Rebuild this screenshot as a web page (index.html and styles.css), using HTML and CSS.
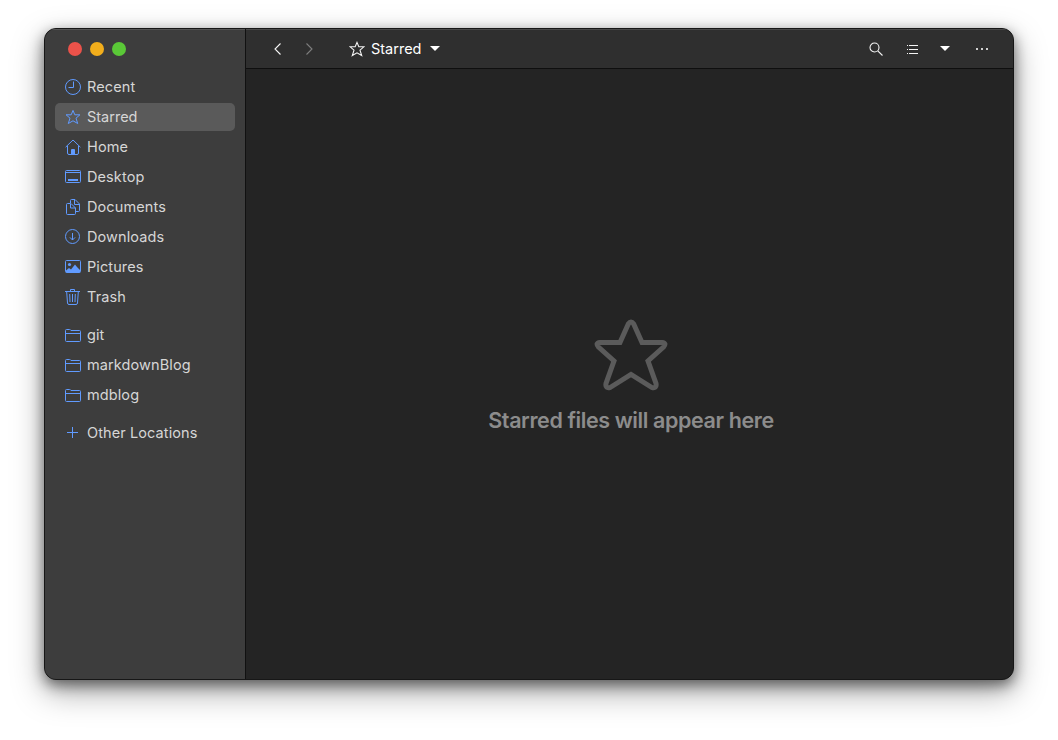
FILE: index.html
```html
<!DOCTYPE html>
<html lang="en">
<head>
<meta charset="utf-8">
<title>Starred</title>
<link rel="stylesheet" href="styles.css">
</head>
<body>
<div class="window">
  <aside class="sidebar">
    <div class="controls"><span class="dot close"></span><span class="dot minimize"></span><span class="dot maximize"></span></div>
    <nav class="places">
      <a class="place"><svg class="icon" viewBox="0 0 16 16"><circle cx="8" cy="8" r="7.5"/><path d="M8.500 2.500v6h-5"/></svg><span>Recent</span></a>
      <a class="place active"><svg class="icon" viewBox="0 0 16 16"><path d="M8 1.400l1.800 4.400h5.100l-3.900 3.400 1.700 5.300L8 11.800l-4.700 2.700L5 9.200 1.100 5.800h5.100z"/></svg><span>Starred</span></a>
      <a class="place"><svg class="icon" viewBox="0 0 16 16"><path d="M.6 8.200L8 1l7.400 7.200M2.500 7v7q0 1.500 1.500 1.500h8q1.500 0 1.500-1.500V7"/><path class="solid" d="M6 15v-4q0-1 1-1h2q1 0 1 1v4z"/></svg><span>Home</span></a>
      <a class="place"><svg class="icon" viewBox="0 0 16 16"><rect x=".5" y="1.500" width="15" height="12" rx="1"/><path d="M1 3.500h14"/><path class="thick" d="M3 11h10"/></svg><span>Desktop</span></a>
      <a class="place"><svg class="icon" viewBox="0 0 16 16"><path d="M5.500 4.500h-3q-1 0-1 1v9q0 1 1 1h7q1 0 1-1V9L6 4.500M5.500 4.500V9h5M5.500 4V1.500q0-1 1-1H10l4.500 4.500v6.500q0 1-1 1h-3M9.500.5v5h5"/></svg><span>Documents</span></a>
      <a class="place"><svg class="icon" viewBox="0 0 16 16"><circle cx="7.500" cy="7.500" r="7"/><path d="M7.500 4v7M4.900 8.400l2.600 2.600 2.600-2.600"/></svg><span>Downloads</span></a>
      <a class="place"><svg class="icon" viewBox="0 0 16 16"><rect x=".5" y="1.500" width="15" height="12" rx="1"/><circle class="solid" cx="4.500" cy="5.500" r="1.600"/><path class="solid" d="M1 11.500l3-2.500 2 1.500 4-5 2 2.500 3 3v2.500H1z"/></svg><span>Pictures</span></a>
      <a class="place"><svg class="icon" viewBox="0 0 16 16"><path d="M0 2.500h15M5.500 2V.5h4V2M1.700 3l.8 11q.1 1.500 1.500 1.500h7q1.400 0 1.500-1.500l.8-11M4.700 5l.3 8M7.500 5v8M10.300 5l-.3 8"/></svg><span>Trash</span></a>
    </nav>
    <nav class="places">
      <a class="place"><svg class="icon" viewBox="0 0 16 16"><path d="M.5 13.500v-10q0-1 1-1h3q1 0 1.500 1h8.500q1 0 1 1v9q0 1-1 1h-13q-1 0-1-1zM1 6.500h14"/></svg><span>git</span></a>
      <a class="place"><svg class="icon" viewBox="0 0 16 16"><path d="M.5 13.500v-10q0-1 1-1h3q1 0 1.500 1h8.500q1 0 1 1v9q0 1-1 1h-13q-1 0-1-1zM1 6.500h14"/></svg><span>markdownBlog</span></a>
      <a class="place"><svg class="icon" viewBox="0 0 16 16"><path d="M.5 13.500v-10q0-1 1-1h3q1 0 1.500 1h8.500q1 0 1 1v9q0 1-1 1h-13q-1 0-1-1zM1 6.500h14"/></svg><span>mdblog</span></a>
    </nav>
    <nav class="places">
      <a class="place"><svg class="icon" viewBox="0 0 16 16"><path d="M7.500 2v11M2 7.500h11"/></svg><span>Other Locations</span></a>
    </nav>
  </aside>
  <main class="main">
    <header class="toolbar">
      <svg class="icon tool" viewBox="0 0 16 16"><path d="M10.500 2.500L5 8l5.500 5.500"/></svg>
      <svg class="icon tool forward" viewBox="0 0 16 16"><path d="M5.500 2.500L11 8l-5.500 5.500"/></svg>
      <div class="path"><svg class="icon tool" viewBox="0 0 16 16"><path d="M8 1.400l1.800 4.400h5.100l-3.900 3.400 1.700 5.300L8 11.800l-4.700 2.700L5 9.200 1.100 5.800h5.100z"/></svg><span>Starred</span><i class="caret"></i></div>
      <svg class="icon tool search" viewBox="0 0 16 16"><circle cx="6.500" cy="6.500" r="4.500"/><path d="M9.800 9.800l4.700 4.700"/></svg>
      <svg class="icon tool list" viewBox="0 0 16 16"><path d="M5 4.500h9M5 8.500h9M5 12.500h9M3 4.500h1M3 8.500h1M3 12.500h1"/></svg>
      <i class="caret view"></i>
      <svg class="icon tool more" viewBox="0 0 16 16"><path class="thick" d="M2 8h2M7 8h2M12 8h2"/></svg>
    </header>
    <section class="empty">
      <svg class="big-star" viewBox="0 0 74 72"><path d="M34.300 5Q37 1 39.700 5L48 23.500H68Q73 24 69.500 28L54 42L62 64.500Q63 70 57.500 68.300L37 55.500L16.500 68.300Q11 70 12 64.500L20 42L4.500 28Q1 24 6 23.500H26Z"/></svg>
      <h1>Starred files will appear here</h1>
    </section>
  </main>
</div>
</body>
</html>
```
FILE: styles.css
```css
* { box-sizing: border-box; }
body {
  margin: 0;
  height: 740px;
  padding: 28px 44px 60px;
  overflow: hidden;
  background: #fff;
  font: 14.5px/28px Inter, "Liberation Sans", sans-serif;
}
.window {
  display: flex;
  width: 970px;
  height: 652px;
  border: 1px solid #171717;
  border-radius: 12px;
  overflow: hidden;
  background: #242424;
  box-shadow: 0 12px 32px rgba(0,0,0,.35), 0 5px 14px rgba(0,0,0,.5);
}
.sidebar {
  width: 201px;
  flex: none;
  padding: 0 10px;
  background: #3d3d3d;
  border-right: 1px solid #111;
  box-shadow: inset 0 1px #555;
  color: #d6d6d6;
  letter-spacing: .1px;
}
.controls { display: flex; gap: 8px; padding: 13px 0 0 13px; height: 44px; }
.dot { width: 14px; height: 14px; border-radius: 50%; }
.close { background: #eb524a; }
.minimize { background: #f2ae1c; }
.maximize { background: #5ac837; }
.places { display: flex; flex-direction: column; gap: 2px; margin-bottom: 10px; }
.place { display: flex; align-items: center; gap: 6px; height: 28px; padding-left: 10px; border-radius: 5px; white-space: nowrap; }
.active { background: #5a5a5a; letter-spacing: 0; }
.icon { width: 16px; height: 16px; flex: none; fill: none; stroke: #619bff; stroke-width: 1; }
.solid { fill: #619bff; stroke: none; }
.thick { stroke-width: 2; }
.main { flex: 1; display: flex; flex-direction: column; }
.toolbar {
  display: flex;
  align-items: center;
  height: 40px;
  padding: 0 23px 0 24px;
  background: #2f2f2f;
  border-bottom: 1px solid #0f0f0f;
  box-shadow: inset 0 1px #494949;
  color: #fff;
}
.tool { stroke: #f4f4f4; stroke-width: 1.1; }
.list { stroke-width: 1; }
.tool .thick { stroke: #d0d0d0; stroke-width: 2; }
.forward { margin-left: 15px; opacity: .4; }
.path { display: flex; align-items: center; margin-left: 32px; }
.path span { margin-left: 6px; }
.caret { border: 5px solid transparent; border-top-color: #fff; border-bottom: 0; }
.path .caret { margin-left: 8px; }
.search { margin-left: auto; }
.list { margin-left: 20px; }
.view { margin-left: 20px; }
.more { margin-left: 24px; }
.empty { flex: 1; display: flex; flex-direction: column; align-items: center; padding: 250px 0 0 3px; }
.big-star { width: 74px; height: 72px; margin-right: 1px; fill: none; stroke: #5b5b5b; stroke-width: 5; }
h1 { margin: 14px 0 0; color: #8c8c8c; font-size: 21.5px; line-height: 30px; font-weight: 600; letter-spacing: -.4px; }
```
